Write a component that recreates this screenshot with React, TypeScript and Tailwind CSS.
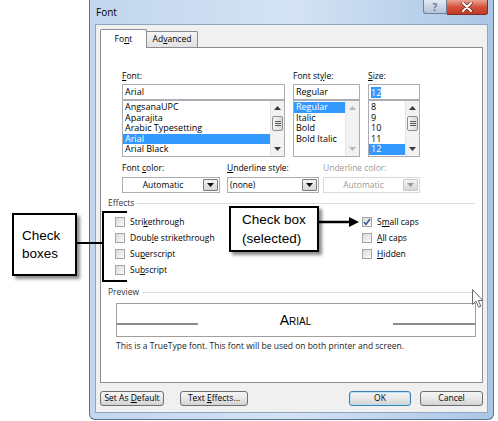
import React from 'react';

const Tri = ({ up = false, color = '#404040' }: { up?: boolean; color?: string }) => (
  <svg width="7" height="4" viewBox="0 0 7 4">
    <path d={up ? 'M0 4 L3.5 0 L7 4Z' : 'M0 0 L7 0 L3.5 4Z'} fill={color} />
  </svg>
);

function Scrollbar({ thumb = true, disabled = false }: { thumb?: boolean; disabled?: boolean }) {
  const c = disabled ? '#b8b8b8' : '#3c3c3c';
  return (
    <div className="w-[14px] h-full flex flex-col bg-[#f2f2f2] border-l border-[#e6e6e6]">
      <div className="h-[14px] flex items-center justify-center">
        <Tri up color={c} />
      </div>
      {thumb && (
        <div className="mx-[1px] mt-px h-[15px] rounded-[2px] border border-[#8e8f8f] bg-gradient-to-r from-[#f6f6f6] to-[#d9d9d9] flex flex-col items-center justify-center gap-[1px]">
          <div className="w-[6px] h-px bg-[#5a5a5a]" />
          <div className="w-[6px] h-px bg-[#5a5a5a]" />
          <div className="w-[6px] h-px bg-[#5a5a5a]" />
        </div>
      )}
      <div className="flex-1" />
      <div className="h-[14px] flex items-center justify-center">
        <Tri color={c} />
      </div>
    </div>
  );
}

function Picker({
  label,
  value,
  items,
  selected,
  className,
  thumb = true,
  disabled = false,
  highlightValue = false,
}: {
  label: React.ReactNode;
  value: string;
  items: string[];
  selected: number;
  className: string;
  thumb?: boolean;
  disabled?: boolean;
  highlightValue?: boolean;
}) {
  return (
    <div className={`flex flex-col ${className}`}>
      <span className="h-[10px] leading-[10px]">{label}</span>
      <div className="mt-[3px] h-[16px] border border-[#abadb3] bg-white flex items-center px-[2px] text-[9px]">
        <span className={highlightValue ? 'bg-[#3399ff] text-white leading-[11px]' : ''}>{value}</span>
      </div>
      <div className="h-[57px] border border-[#abadb3] bg-white flex text-[9px]">
        <div className="flex-1 pt-px overflow-hidden">
          {items.map((it, i) => (
            <div
              key={it}
              className={`h-[10.5px] leading-[10.5px] px-[2px] whitespace-nowrap ${
                i === selected ? 'bg-[#3399ff] text-white' : ''
              }`}
            >
              {it}
            </div>
          ))}
        </div>
        <Scrollbar thumb={thumb} disabled={disabled} />
      </div>
    </div>
  );
}

function Combo({
  className,
  text,
  center = false,
  disabled = false,
}: {
  className: string;
  text: string;
  center?: boolean;
  disabled?: boolean;
}) {
  return (
    <div
      className={`h-[16px] border bg-white flex ${disabled ? 'border-[#d9d9d9] text-[#9a9a9a]' : 'border-[#abadb3]'} ${className}`}
    >
      <div className={`flex-1 flex items-center px-[2px] ${center ? 'justify-center' : ''}`}>{text}</div>
      <div
        className={`w-[15px] my-px mr-px rounded-[1px] border flex items-center justify-center bg-gradient-to-b from-[#f4f4f4] to-[#d6d6d6] ${
          disabled ? 'border-[#c9c9c9]' : 'border-[#7a7a7a]'
        }`}
      >
        <Tri color={disabled ? '#9a9a9a' : '#111'} />
      </div>
    </div>
  );
}

function Check({ checked = false, children }: { checked?: boolean; children: React.ReactNode }) {
  return (
    <div className="h-[16px] flex items-center">
      <div className="w-[10px] h-[10px] border border-[#a4a4a4] bg-gradient-to-br from-[#dcdcdc] to-[#f8f8f8] flex items-center justify-center">
        {checked && (
          <svg width="8" height="8" viewBox="0 0 8 8">
            <path d="M1 4.2 L3 6.5 L7 1" fill="none" stroke="#2b4f9a" strokeWidth="1.4" />
          </svg>
        )}
      </div>
      <span className="ml-[5px]">{children}</span>
    </div>
  );
}

function Group({ title }: { title: string }) {
  return (
    <div className="h-[10px] flex items-center">
      <span className="leading-[10px] text-[#333]">{title}</span>
      <div className="flex-1 ml-[3px] h-px bg-[#d5dfe5]" />
    </div>
  );
}

function Btn({ className, children }: { className: string; children: React.ReactNode }) {
  return (
    <div
      className={`h-[15px] rounded-[3px] border flex items-center justify-center bg-gradient-to-b from-[#f4f4f4] via-[#e8e8e8] to-[#d2d2d2] ${className}`}
    >
      <span>{children}</span>
    </div>
  );
}

export default function App() {
  return (
    <div className="relative w-[498px] h-[421px] bg-white overflow-hidden font-['Open_Sans',sans-serif] text-[8.5px] text-black">
      {/* dialog window */}
      <div className="ml-[89px] w-[405px] h-[420px] flex flex-col rounded-b-[6px] border border-t-0 border-[#5f738f] bg-gradient-to-r from-[#c2d6ee] via-[#d4e3f4] to-[#aac6e6]">
        {/* title bar */}
        <div className="h-[24px] flex items-start">
          <span className="ml-[6px] mt-[5px] text-[10px] leading-[14px]">Font</span>
          <div className="ml-auto mr-[5px] flex">
            <div className="w-[24px] h-[14px] rounded-bl-[3px] border border-t-0 border-[#6d7f97] bg-gradient-to-b from-[#e3eaf3] to-[#b4c4d9] flex items-center justify-center text-[10px] leading-none text-[#6b7b92] font-bold">
              ?
            </div>
            <div className="w-[41px] h-[15px] rounded-br-[3px] border border-l-0 border-t-0 border-[#7a2f24] bg-gradient-to-b from-[#e8a493] via-[#d2503c] to-[#c13a25] flex items-center justify-center">
              <svg width="12" height="10" viewBox="0 0 12 10">
                <path d="M2 1 L10 9 M10 1 L2 9" stroke="#6a2a20" strokeWidth="3.4" strokeLinecap="round" />
                <path d="M2 1 L10 9 M10 1 L2 9" stroke="#fff" strokeWidth="2" strokeLinecap="round" />
              </svg>
            </div>
          </div>
        </div>

        {/* client area */}
        <div className="mx-[5px] mb-[6px] flex-1 bg-[#f0f0f0] border border-[#8fa5c1] flex flex-col px-[4px] pt-[4px]">
          {/* tabs */}
          <div className="relative z-10 h-[19px] -mb-px flex items-start">
            <div className="w-[47px] h-[19px] bg-white border border-b-0 border-[#898c95] rounded-t-[2px] flex items-center justify-center">
              <span>
                Fo<u>n</u>t
              </span>
            </div>
            <div className="mt-[2px] w-[51px] h-[16px] border border-l-0 border-b-0 border-[#898c95] rounded-tr-[2px] bg-gradient-to-b from-[#f5f5f5] to-[#e1e1e1] flex items-center justify-center">
              <span>
                Ad<u>v</u>anced
              </span>
            </div>
          </div>

          {/* tab panel */}
          <div className="h-[336px] bg-white border border-[#898c95] flex flex-col">
            <div className="flex pl-[21px] pt-[23px] gap-[8px]">
              <Picker
                className="w-[163px]"
                label={
                  <>
                    <u>F</u>ont:
                  </>
                }
                value="Arial"
                items={['AngsanaUPC', 'Aparajita', 'Arabic Typesetting', 'Arial', 'Arial Black']}
                selected={3}
              />
              <Picker
                className="w-[67px]"
                label={
                  <>
                    Font st<u>y</u>le:
                  </>
                }
                value="Regular"
                items={['Regular', 'Italic', 'Bold', 'Bold Italic']}
                selected={0}
                thumb={false}
                disabled
              />
              <Picker
                className="w-[52px]"
                label={
                  <>
                    <u>S</u>ize:
                  </>
                }
                value="12"
                items={['8', '9', '10', '11', '12']}
                selected={4}
                highlightValue
              />
            </div>

            <div className="flex pl-[21px] mt-[6px]">
              <div className="flex flex-col w-[98px]">
                <span className="h-[10px] leading-[10px]">
                  Font <u>c</u>olor:
                </span>
                <Combo className="mt-[4px] w-[98px]" text="Automatic" center />
              </div>
              <div className="flex flex-col w-[92px] ml-[7px]">
                <span className="h-[10px] leading-[10px]">
                  <u>U</u>nderline style:
                </span>
                <Combo className="mt-[4px] w-[92px]" text="(none)" />
              </div>
              <div className="flex flex-col w-[97px] ml-[4px]">
                <span className="h-[10px] leading-[10px] text-[#9a9a9a]">Underline color:</span>
                <Combo className="mt-[4px] w-[97px]" text="Automatic" center disabled />
              </div>
            </div>

            {/* effects */}
            <div className="mt-[5px] px-[7px] flex flex-col">
              <Group title="Effects" />
              <div className="mt-[6px] pl-[7px] flex">
                <div className="w-[247px] flex flex-col">
                  <Check>
                    Stri<u>k</u>ethrough
                  </Check>
                  <Check>
                    Doub<u>l</u>e strikethrough
                  </Check>
                  <Check>
                    Su<u>p</u>erscript
                  </Check>
                  <Check>
                    Su<u>b</u>script
                  </Check>
                </div>
                <div className="flex flex-col">
                  <Check checked>
                    S<u>m</u>all caps
                  </Check>
                  <Check>
                    <u>A</u>ll caps
                  </Check>
                  <Check>
                    <u>H</u>idden
                  </Check>
                </div>
              </div>

              <div className="mt-[9px]">
                <Group title="Preview" />
              </div>
              <div className="mt-[6px] ml-[8px] w-[360px] h-[34px] border border-[#a0a0a0] flex items-center">
                <div className="w-[81px] h-[2px] mt-[8px] bg-[#8c8c8c]" />
                <div className="flex-1 text-center font-['Liberation_Sans',sans-serif] text-[14px] leading-[16px] [font-variant-caps:small-caps]">
                  Arial
                </div>
                <div className="w-[82px] h-[2px] mt-[8px] bg-[#8c8c8c]" />
              </div>
              <div className="mt-[4px] ml-[8px] leading-[10px] text-[#222]">
                This is a TrueType font. This font will be used on both printer and screen.
              </div>
            </div>
          </div>

          {/* buttons */}
          <div className="mt-[8px] flex">
            <Btn className="w-[64px] border-[#707070]">
              Set As <u>D</u>efault
            </Btn>
            <Btn className="ml-[16px] w-[68px] border-[#707070]">
              Text <u>E</u>ffects...
            </Btn>
            <Btn className="ml-auto w-[62px] border-[#3c7fb1] shadow-[inset_0_0_0_1px_#b7e1f7]">OK</Btn>
            <Btn className="ml-[9px] w-[63px] border-[#707070]">Cancel</Btn>
          </div>
        </div>
      </div>

      {/* callout: check boxes */}
      <div className="absolute left-[12px] top-[213px] w-[65px] h-[63px] border-2 border-black bg-white shadow-[3px_3px_3px_rgba(0,0,0,0.45)] flex flex-col justify-center pl-[8px] font-['Liberation_Sans',sans-serif] text-[13.5px] leading-[18px]">
        <span>Check</span>
        <span>boxes</span>
      </div>
      <div className="absolute left-[77px] top-[242px] w-[26px] h-[2px] bg-black" />
      <div className="absolute left-[102px] top-[211px] w-[25px] h-[71px] border-2 border-r-0 border-black" />

      {/* callout: selected check box */}
      <div className="absolute left-[229px] top-[206px] w-[90px] h-[46px] border-2 border-black bg-white shadow-[3px_3px_3px_rgba(0,0,0,0.45)] flex flex-col justify-center pl-[11px] font-['Liberation_Sans',sans-serif] text-[13.5px] leading-[19px]">
        <span>Check box</span>
        <span>(selected)</span>
      </div>
      <svg className="absolute left-[319px] top-[216px]" width="41" height="12" viewBox="0 0 41 12">
        <path d="M0 6 L32 6" stroke="#000" strokeWidth="2.5" />
        <path d="M30 1 L40 6 L30 11Z" fill="#000" />
      </svg>

      {/* mouse cursor */}
      <svg className="absolute left-[472px] top-[289px]" width="12" height="20" viewBox="0 0 12 20">
        <path
          d="M0.5 0.5 L0.5 15.5 L4 12.2 L6.6 18.2 L8.8 17.3 L6.3 11.5 L10.8 11.5 Z"
          fill="#fff"
          stroke="#6a6a6a"
          strokeWidth="1"
        />
      </svg>
    </div>
  );
}
